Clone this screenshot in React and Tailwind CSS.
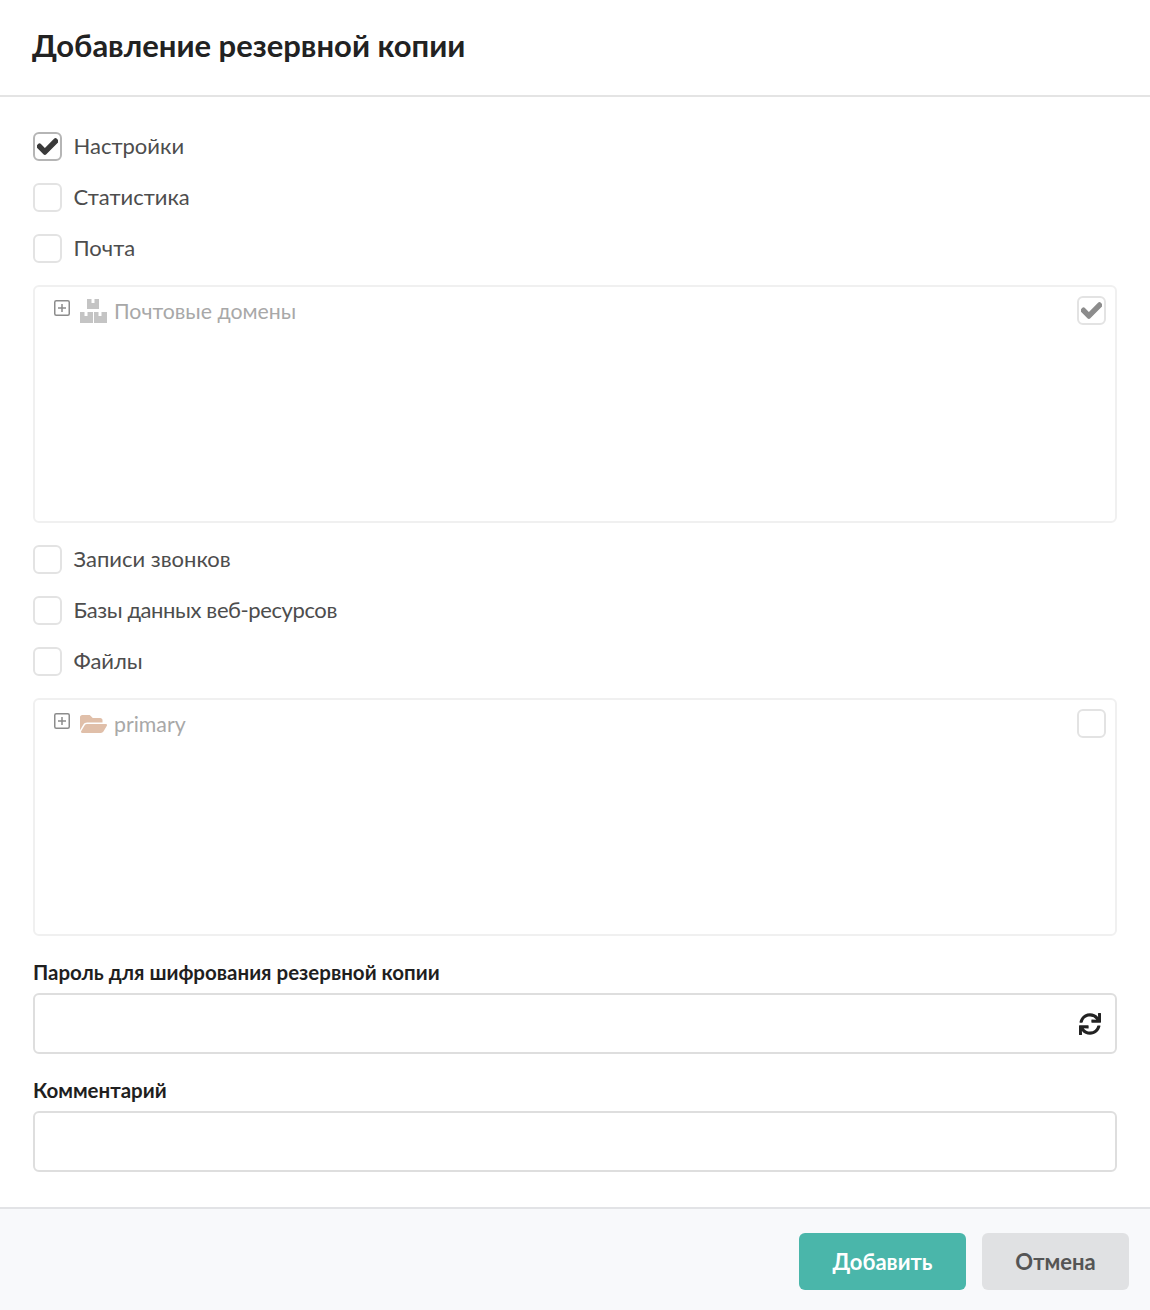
import React from 'react';
import { FaCheck, FaSync, FaFolderOpen } from 'react-icons/fa';

const Check = ({ checked, dim }) => (
  <span className={`flex h-[29px] w-[29px] shrink-0 items-center justify-center rounded-[6px] border-2 bg-white ${checked && !dim ? 'border-[#b5b5b5]' : 'border-[#e3e3e3]'}`}>
    {checked && <FaCheck stroke="currentColor" strokeWidth="30" className={`h-[21px] w-[21px] ${dim ? 'text-[#8c8c8c]' : 'text-[#3a3a3a]'}`} />}
  </span>
);

const Row = ({ label, checked, tight }) => (
  <div className={`flex h-[28px] items-center gap-[11.5px] text-[22px] text-[#4d4d4d] ${tight ? 'tracking-[-0.4px]' : ''}`}>
    <Check checked={checked} />
    <span className="-mt-[2px]">{label}</span>
  </div>
);

const Plus = () => (
  <svg width="16" height="16" viewBox="0 0 16 16" className="shrink-0 text-[#8c8c8c]">
    <rect x="0.75" y="0.75" width="14.5" height="14.5" rx="1.5" fill="none" stroke="currentColor" strokeWidth="1.5" />
    <path d="M4 8h8M8 4v8" stroke="currentColor" strokeWidth="1.5" />
  </svg>
);

const Boxes = () => (
  <svg width="27" height="25" viewBox="0 0 27 25" className="-mt-[4px] text-[#c4c4c4]">
    <path
      fill="currentColor"
      fillRule="evenodd"
      d="M7 1h4.5v4h3V1H19v10H7zM0 14h4.5v4h3v-4H13v11H0zM14 14h4.5v4h3v-4H27v11H14z"
    />
  </svg>
);

const TreeBox = ({ icon, label, checked }) => (
  <div className="flex h-[238px] items-start justify-between rounded-[6px] border-2 border-[#f0f0f0] pl-[19px] pr-[9px] pt-[9px]">
    <div className="mt-[1px] flex h-[30px] items-center text-[21.3px] text-[#a8a8a8]">
      <span className="-mt-[8px]"><Plus /></span>
      <span className="ml-[10px] mr-[7px] flex w-[27px] justify-center">{icon}</span>
      <span>{label}</span>
    </div>
    <Check checked={checked} dim />
  </div>
);

const Field = ({ label, children }) => (
  <div>
    <div className="text-[20.5px] font-bold leading-[24px] text-[#1f1f1f]">{label}</div>
    <div className="relative mt-[9px] h-[61px] rounded-[6px] border-2 border-[#dedede] bg-white">{children}</div>
  </div>
);

export default function App() {
  return (
    <div className="flex h-[1310px] w-[1150px] flex-col bg-white font-['Lato','Liberation_Sans',sans-serif]">
      <div className="flex h-[97px] items-center border-b-2 border-[#e4e4e4] pb-[4px] pl-[32px] pr-[33px]">
        <h1 className="text-[31px] font-bold text-[#222222]">Добавление резервной копии</h1>
      </div>

      <div className="flex flex-1 flex-col px-[33px] pt-[35px]">
        <div className="flex flex-col gap-[23px]">
          <Row label="Настройки" checked />
          <Row label="Статистика" />
          <Row label="Почта" />
        </div>
        <div className="mt-[23px]">
          <TreeBox label="Почтовые домены" checked icon={<Boxes />} />
        </div>
        <div className="mt-[22px] flex flex-col gap-[23px]">
          <Row label="Записи звонков" />
          <Row label="Базы данных веб-ресурсов" tight />
          <Row label="Файлы" />
        </div>
        <div className="mt-[23px]">
          <TreeBox label="primary" icon={<FaFolderOpen className="-mt-[2px] h-[24px] w-[27px] text-[#e0bfa9]" />} />
        </div>
        <div className="mt-[24px]">
          <Field label="Пароль для шифрования резервной копии">
            <FaSync className="absolute right-[14px] top-[18px] h-[22px] w-[22px] text-[#222222]" />
          </Field>
        </div>
        <div className="mt-[24px]">
          <Field label="Комментарий" />
        </div>
      </div>

      <div className="flex h-[103px] items-start justify-end gap-[16px] border-t-2 border-[#e2e3e6] bg-[#f8f9fb] pr-[21px] pt-[24px]">
        <button className="h-[57px] w-[167px] rounded-[6px] bg-[#4ab6aa] text-[22px] font-bold text-white">Добавить</button>
        <button className="h-[57px] w-[147px] rounded-[6px] bg-[#e0e1e3] text-[22px] font-bold text-[#555555]">Отмена</button>
      </div>
    </div>
  );
}
